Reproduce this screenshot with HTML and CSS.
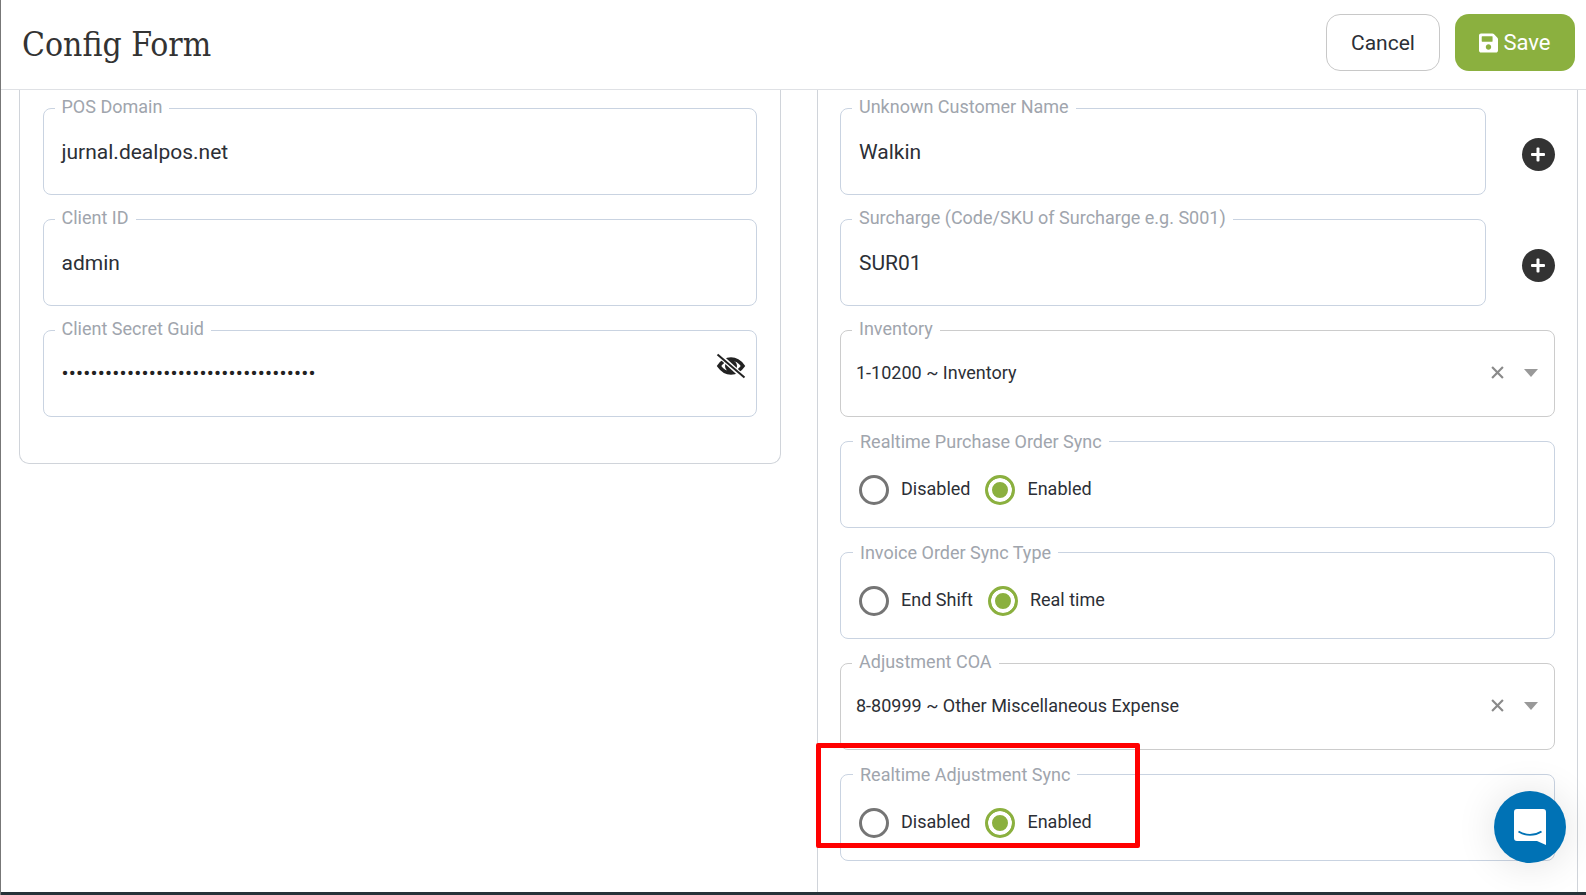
FILE: index.html
```html
<!DOCTYPE html>
<html lang="en">
<head>
<meta charset="utf-8">
<title>Config Form</title>
<link rel="stylesheet" href="styles.css">
</head>
<body>
<div class="app">
  <header class="topbar">
    <h1 class="title">Config Form</h1>
    <div class="actions">
      <button class="btn btn-cancel" type="button">Cancel</button>
      <button class="btn btn-save" type="button">
        <svg class="save-icon" viewBox="0 0 448 512" aria-hidden="true"><path fill="currentColor" d="M433.941 129.941l-83.882-83.882A48 48 0 0 0 316.118 32H48C21.49 32 0 53.49 0 80v352c0 26.51 21.49 48 48 48h352c26.51 0 48-21.49 48-48V163.882a48 48 0 0 0-14.059-33.941zM224 416c-35.346 0-64-28.654-64-64 0-35.346 28.654-64 64-64s64 28.654 64 64c0 35.346-28.654 64-64 64zm96-304.52V212c0 6.627-5.373 12-12 12H76c-6.627 0-12-5.373-12-12V108c0-6.627 5.373-12 12-12h228.52c3.183 0 6.235 1.264 8.485 3.515l3.48 3.48A11.996 11.996 0 0 1 320 111.48z"/></svg>
        Save
      </button>
    </div>
  </header>

  <main class="content">
    <section class="col-left">
      <div class="card">
        <fieldset class="field"><legend>POS Domain</legend><div class="value">jurnal.dealpos.net</div></fieldset>
        <fieldset class="field"><legend>Client ID</legend><div class="value">admin</div></fieldset>
        <fieldset class="field field-password"><legend>Client Secret Guid</legend>
          <div class="dots">•••••••••••••••••••••••••••••••••••</div>
          <svg class="eye" viewBox="0 0 30 26" aria-hidden="true">
            <path d="M3 13C6.500 8 10 6 15 6s8.500 2 12 7c-3.500 5-7 7-12 7S6.500 18 3 13z" fill="none" stroke="#222" stroke-width="3.600"/>
            <circle cx="15" cy="13" r="6" fill="#222"/>
            <path d="M3 2l24 22" stroke="#fff" stroke-width="5"/>
            <path d="M1.500 1.500l27 23" stroke="#222" stroke-width="2"/>
          </svg>
        </fieldset>
      </div>
    </section>

    <section class="col-right">
      <div class="row">
        <fieldset class="field field-short"><legend>Unknown Customer Name</legend><div class="value">Walkin</div></fieldset>
        <button class="add" type="button" aria-label="Add"></button>
      </div>
      <div class="row">
        <fieldset class="field field-short"><legend>Surcharge (Code/SKU of Surcharge e.g. S001)</legend><div class="value">SUR01</div></fieldset>
        <button class="add" type="button" aria-label="Add"></button>
      </div>
      <fieldset class="field field-select"><legend>Inventory</legend>
        <div class="select">
          <span class="select-text">1-10200 ~ Inventory</span>
          <svg class="clear" viewBox="0 0 12 12" aria-hidden="true"><path d="M1 1l10 10M11 1L1 11" stroke="#8a8a8a" stroke-width="2"/></svg>
          <span class="caret"></span>
        </div>
      </fieldset>
      <fieldset class="field field-radio"><legend>Realtime Purchase Order Sync</legend>
        <div class="radios">
          <label class="radio"><span class="dot"></span>Disabled</label>
          <label class="radio"><span class="dot dot-on"></span>Enabled</label>
        </div>
      </fieldset>
      <fieldset class="field field-radio"><legend>Invoice Order Sync Type</legend>
        <div class="radios">
          <label class="radio"><span class="dot"></span>End Shift</label>
          <label class="radio"><span class="dot dot-on"></span>Real time</label>
        </div>
      </fieldset>
      <fieldset class="field field-select"><legend>Adjustment COA</legend>
        <div class="select">
          <span class="select-text">8-80999 ~ Other Miscellaneous Expense</span>
          <svg class="clear" viewBox="0 0 12 12" aria-hidden="true"><path d="M1 1l10 10M11 1L1 11" stroke="#8a8a8a" stroke-width="2"/></svg>
          <span class="caret"></span>
        </div>
      </fieldset>
      <fieldset class="field field-radio"><legend>Realtime Adjustment Sync</legend>
        <div class="radios">
          <label class="radio"><span class="dot"></span>Disabled</label>
          <label class="radio"><span class="dot dot-on"></span>Enabled</label>
        </div>
      </fieldset>
    </section>
  </main>
  <div class="footer-bar"></div>

  <div class="highlight"></div>
  <button class="chat" type="button" aria-label="Chat">
    <svg viewBox="0 0 32 36" aria-hidden="true">
      <path fill="#fff" d="M3 0h26a3 3 0 0 1 3 3v33l-9-4H3a3 3 0 0 1-3-3V3a3 3 0 0 1 3-3z"/>
      <path d="M4.500 22.500c7 4.500 16 4.500 23 0" fill="none" stroke="#0072b5" stroke-width="1.800"/>
    </svg>
  </button>
</div>
</body>
</html>
```

FILE: styles.css
```css
* { box-sizing: border-box; }
html, body { margin: 0; padding: 0; height: 100%; overflow: hidden; background: #fff; }
body { font-family: Roboto, "Liberation Sans", sans-serif; color: #2c2f36; }

.app {
  position: relative;
  display: flex;
  flex-direction: column;
  width: 1586px;
  height: 895px;
  border-left: 1px solid #777;
}

.topbar {
  flex: none;
  display: flex;
  align-items: flex-start;
  justify-content: space-between;
  height: 90px;
  padding: 14px 11px 0 21px;
  border-bottom: 1px solid #dfe1e5;
}
.title {
  margin: 11px 0 0;
  font-family: "Roboto Slab", "DejaVu Serif Condensed", "DejaVu Serif", serif;
  font-size: 33.400px;
  line-height: 40px;
  font-weight: 400;
  color: #333;
}
.actions { display: flex; gap: 15px; }
.btn {
  height: 57px;
  border-radius: 14px;
  font-family: inherit;
  font-size: 22px;
  cursor: pointer;
}
.btn-cancel { width: 114px; background: #fff; border: 1px solid #c8c8c8; color: #2c2f36; font-size: 21px; }
.btn-save {
  display: flex;
  align-items: center;
  justify-content: center;
  gap: 5px;
  width: 120px;
  background: #8bb03f;
  border: 0;
  color: #fff;
}
.save-icon { width: 19px; height: 22px; }

.content {
  flex: 1;
  min-height: 0;
  display: grid;
  grid-template-columns: 762px 761px;
  column-gap: 36px;
  padding-left: 18px;
  overflow: hidden;
}

.col-left { min-width: 0; }
.card {
  display: flex;
  flex-direction: column;
  gap: 14px;
  height: 374px;
  padding: 8px 23px 0;
  border: 1px solid #d0d4da;
  border-top: 0;
  border-radius: 0 0 10px 10px;
}
.card .field { padding-left: 17.500px; }
.col-right {
  display: flex;
  flex-direction: column;
  gap: 14px;
  padding: 8px 22px 0;
  border-left: 1px solid #d0d4da;
  border-right: 1px solid #d0d4da;
}
.row { display: flex; align-items: flex-start; justify-content: space-between; }

.field {
  position: relative;
  flex: none;
  min-width: 0;
  height: 97px;
  margin: 0;
  padding: 0 0 0 18px;
  border: 1px solid #c9d3e1;
  border-radius: 8px;
}
.field legend {
  margin-left: -7px;
  padding: 0 7px 2px;
  font-size: 18px;
  line-height: 18px;
  color: #a0a5ad;
}
.field-short { width: 646px; }
.field-select { padding-left: 15px; border-color: #cccccc; }
.field-select legend { margin-left: -4px; }
.field-radio legend { margin-left: -6px; padding: 2px 7px 0; }

.value { margin-top: 19px; font-size: 21px; line-height: 30px; color: #2c2f36; }
.dots { margin-top: 18px; font-size: 21px; line-height: 30px; letter-spacing: 0.180px; color: #222; }
.eye { position: absolute; top: 13px; right: 10px; width: 30px; height: 26px; }

.select { display: flex; align-items: center; height: 30px; margin-top: 17px; padding-right: 16px; }
.select-text { flex: 1; font-size: 18px; color: #2c2f36; }
.clear { width: 13px; height: 13px; margin-right: 20px; }
.caret {
  width: 0;
  height: 0;
  margin-top: 2px;
  border-left: 7px solid transparent;
  border-right: 7px solid transparent;
  border-top: 8px solid #999;
}

.radios { display: flex; gap: 15px; margin-top: 23px; }
.radio { display: flex; align-items: flex-start; gap: 12px; height: 31px; font-size: 18px; line-height: 30px; color: #2c2f36; }
.dot {
  display: block;
  width: 30px;
  height: 30px;
  margin-top: 1px;
  border: 3.500px solid #757575;
  border-radius: 50%;
  background: #fff;
}
.dot-on { border-color: #8bb03f; background: #8bb03f; box-shadow: inset 0 0 0 4px #fff; }

.add {
  position: relative;
  flex: none;
  width: 33px;
  height: 33px;
  margin: 40px 0.500px 0 0;
  padding: 0;
  border: 0;
  border-radius: 50%;
  background: #333;
}
.add::before, .add::after {
  content: "";
  position: absolute;
  left: 9.500px;
  top: 15px;
  width: 14px;
  height: 3px;
  background: #fff;
  border-radius: 1px;
}
.add::after { transform: rotate(90deg); }

.footer-bar { flex: none; height: 3px; background: #263238; }

.highlight {
  position: absolute;
  left: 815px;
  top: 743px;
  width: 324px;
  height: 105px;
  border: 5px solid #ff0000;
  border-radius: 2px;
}

.chat {
  position: absolute;
  left: 1493px;
  top: 791px;
  display: flex;
  align-items: center;
  justify-content: center;
  width: 72px;
  height: 72px;
  padding: 0;
  border: 0;
  border-radius: 50%;
  background: #0072b5;
  box-shadow: 0 2px 40px rgba(0, 0, 0, 0.12);
}
.chat svg { width: 32px; height: 36px; }
```
